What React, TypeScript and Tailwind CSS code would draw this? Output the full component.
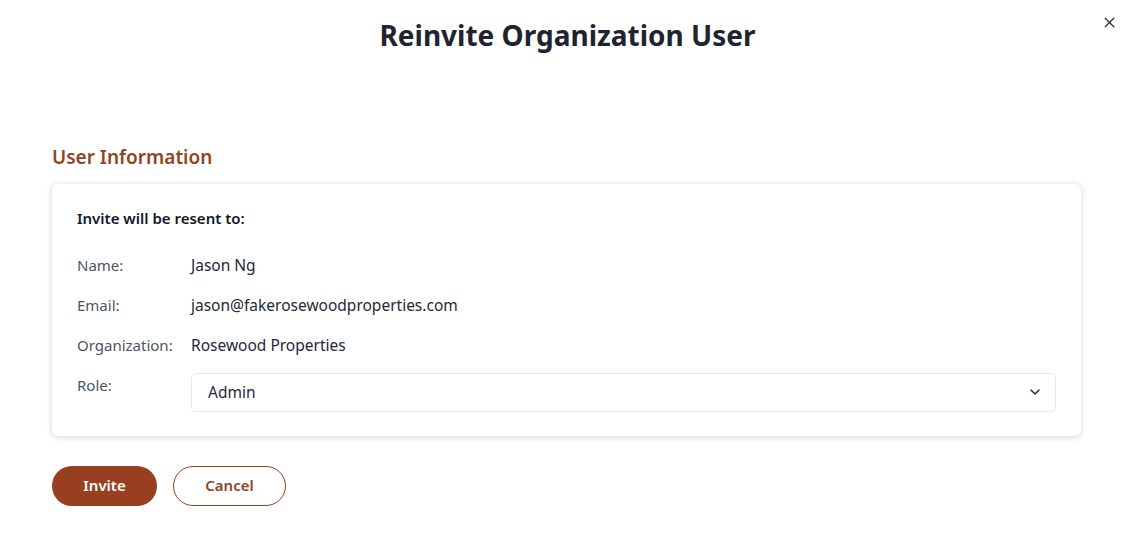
import React from 'react';
import { X, ChevronDown } from 'lucide-react';

const font = { fontFamily: '"Noto Sans", "Open Sans", sans-serif' };

const InfoRow = ({ label, children }: { label: string; children: React.ReactNode }) => (
  <div className="flex items-start leading-[22px]">
    <div className="w-[114px] shrink-0 text-[15px] text-[#4b5563]">{label}</div>
    <div className="flex-1 text-[15.5px] text-[#1f2937]">{children}</div>
  </div>
);

export default function App() {
  return (
    <div className="min-h-[535px] w-[1135px] bg-white" style={font}>
      <div className="relative flex h-[69px] items-center justify-center">
        <h1 className="text-[28px] font-bold text-[#1f2430]">Reinvite Organization User</h1>
        <button className="absolute right-[17px] top-[14px] text-[#1f2937]">
          <X size={17} strokeWidth={1.75} />
        </button>
      </div>

      <div className="px-[52px] pt-[75px]">
        <h2 className="text-[19px] font-semibold leading-[26px] text-[#8f4522]">User Information</h2>

        <div className="mt-[14px] w-[1029px] rounded-[6px] bg-white px-[25px] pb-[24px] pt-[23px] shadow-[0_1px_6px_rgba(0,0,0,0.18)]">
          <div className="text-[15px] font-semibold text-[#111827]">Invite will be resent to:</div>

          <div className="mt-[24px] flex flex-col gap-[18px]">
            <InfoRow label="Name:">Jason Ng</InfoRow>
            <InfoRow label="Email:">jason@fakerosewoodproperties.com</InfoRow>
            <InfoRow label="Organization:">Rosewood Properties</InfoRow>
            <div className="flex items-start leading-[22px]">
              <div className="w-[114px] shrink-0 text-[15px] text-[#4b5563]">Role:</div>
              <div className="-mt-[1px] flex h-[39px] flex-1 items-center justify-between rounded-[5px] border border-[#e5e7eb] pl-[16px] pr-[12px] text-[15.5px] text-[#1f2937]">
                <span>Admin</span>
                <ChevronDown size={16} strokeWidth={2.25} className="text-[#1f2937]" />
              </div>
            </div>
          </div>
        </div>

        <div className="mt-[30px] flex gap-[16px]">
          <button className="h-[40px] w-[105px] rounded-full bg-[#973f1f] text-[15px] font-semibold text-white">Invite</button>
          <button className="h-[40px] w-[113px] rounded-full border border-[#973f1f] bg-white text-[15px] font-semibold text-[#8f4522]">Cancel</button>
        </div>
      </div>
    </div>
  );
}
